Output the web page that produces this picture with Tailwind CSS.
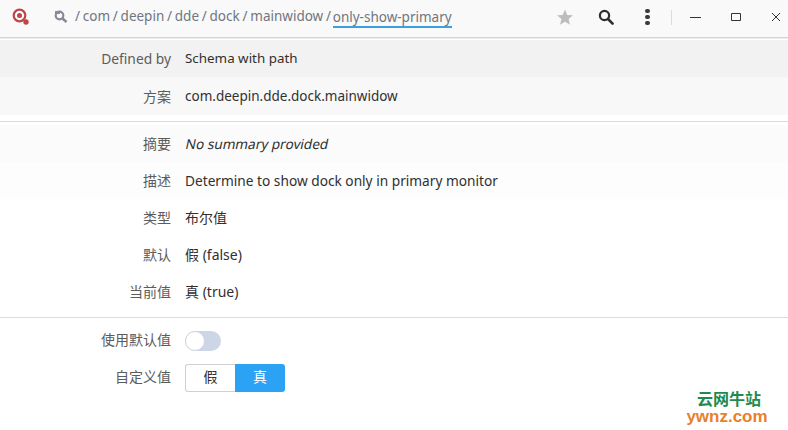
<!DOCTYPE html>
<html lang="en">
<head>
  <meta charset="UTF-8">
  <title>dconf</title>
  <script src="https://cdn.jsdelivr.net/npm/@tailwindcss/browser@4"></script>
</head>
<body class="bg-white text-[#303030] overflow-hidden font-['Noto_Sans','Noto_Sans_CJK_SC',sans-serif] text-sm">
  <div class="relative w-[788px] h-[430px] overflow-hidden">
    <!-- Header -->
    <header class="h-[38px] pb-[3px] flex items-center bg-[#f9f9f9] border-b border-[#d4d4d4] shadow-[0_1px_0_#ececec]">
      <svg class="ml-[12px] w-[18px] h-[18px]" viewBox="0 0 18 18">
        <circle cx="7.5" cy="7.5" r="5.8" fill="none" stroke="#c04548" stroke-width="2.2"/>
        <circle cx="7.5" cy="7.5" r="2.5" fill="#c04548"/>
        <circle cx="14" cy="14" r="2.7" fill="#c04548"/>
      </svg>
      <svg class="ml-[24px] w-[14px] h-[14px]" viewBox="0 0 14 14">
        <circle cx="5.5" cy="5.5" r="3.8" fill="none" stroke="#868b96" stroke-width="2.2"/>
        <path d="M8.5 8.5 L12.5 12" stroke="#868b96" stroke-width="2.6"/>
        <path d="M1 1h5v3H1z" fill="#868b96"/>
      </svg>
      <nav class="ml-[7px] flex items-center gap-[2.75px] text-[13.5px] text-[#6f7680] whitespace-nowrap">
        <span>/</span><span>com</span><span>/</span><span>deepin</span><span>/</span><span>dde</span><span>/</span><span>dock</span><span>/</span><span>mainwidow</span><span>/</span>
        <span class="-ml-[1px] h-[18px] leading-[18px] border-b-2 border-[#3b9fe0] mt-[1px] box-content">only-show-primary</span>
      </nav>
      <div class="ml-auto flex items-center h-full">
        <svg class="w-[18px] h-[18px] mr-[24px]" viewBox="0 0 24 24"><path d="M12 2l3 7.2 7.6.6-5.8 5 1.8 7.4L12 18.3 5.4 22.2l1.8-7.4-5.8-5 7.6-.6z" fill="#bdbdbd"/></svg>
        <svg class="w-[16px] h-[16px] mr-[31px]" viewBox="0 0 16 16">
          <circle cx="6.5" cy="6.5" r="4.6" fill="none" stroke="#2e2e2e" stroke-width="2.2"/>
          <path d="M10 10l4.6 4.6" stroke="#2e2e2e" stroke-width="2.6" stroke-linecap="round"/>
        </svg>
        <div class="flex flex-col gap-[2px] mr-[21px]">
          <span class="w-[5px] h-[4px] rounded-full bg-[#3a3a3a]"></span>
          <span class="w-[5px] h-[4px] rounded-full bg-[#3a3a3a]"></span>
          <span class="w-[5px] h-[4px] rounded-full bg-[#3a3a3a]"></span>
        </div>
        <div class="w-px h-[15px] bg-[#dcdcdc] mr-[18px]"></div>
        <svg class="w-[12px] h-[12px] mr-[28px]" viewBox="0 0 12 12"><path d="M0 6.5h11" stroke="#333" stroke-width="1"/></svg>
        <svg class="w-[12px] h-[12px] mr-[28px]" viewBox="0 0 12 12"><path d="M1.5 2.5h9v7h-9z" fill="none" stroke="#333" stroke-width="1"/></svg>
        <svg class="w-[12px] h-[12px] mr-[6px]" viewBox="0 0 12 12"><path d="M2 2l8 8M10 2l-8 8" stroke="#333" stroke-width="1"/></svg>
      </div>
    </header>

    <!-- Property rows -->
    <main class="pt-[2px]">
      <div class="h-[37px] flex items-center bg-[#f2f2f2]">
        <div class="w-[171px] text-right text-[#5c5c5c] text-[13.8px]">Defined by</div>
        <div class="ml-[14px] text-[13.4px]">Schema with path</div>
      </div>
      <div class="h-[38px] pt-[2px] flex items-center bg-[#f8f8f8]">
        <div class="w-[171px] text-right text-[#5c5c5c]">方案</div>
        <div class="ml-[14px] text-[13.5px]">com.deepin.dde.dock.mainwidow</div>
      </div>
      <div class="mt-[6px] border-t border-[#dcdcdc]"></div>
      <div class="h-[37px] mt-[3px] flex items-center bg-[#fbfbfb]">
        <div class="w-[171px] text-right text-[#5c5c5c]">摘要</div>
        <div class="ml-[15px] text-[13.6px] inline-block -skew-x-12">No summary provided</div>
      </div>
      <div class="h-[37px] flex items-center bg-[#fdfdfd]">
        <div class="w-[171px] text-right text-[#5c5c5c]">描述</div>
        <div class="ml-[14px] text-[13.7px]">Determine to show dock only in primary monitor</div>
      </div>
      <div class="h-[37px] flex items-center">
        <div class="w-[171px] text-right text-[#5c5c5c]">类型</div>
        <div class="ml-[14px]">布尔值</div>
      </div>
      <div class="h-[37px] flex items-center">
        <div class="w-[171px] text-right text-[#5c5c5c]">默认</div>
        <div class="ml-[14px]">假 (false)</div>
      </div>
      <div class="h-[37px] flex items-center">
        <div class="w-[171px] text-right text-[#5c5c5c]">当前值</div>
        <div class="ml-[14px]">真 (true)</div>
      </div>
      <div class="mt-[7px] border-t border-[#dcdcdc]"></div>
      <div class="h-[37px] mt-[4px] flex items-center">
        <div class="w-[171px] pb-[2px] text-right text-[#5c5c5c]">使用默认值</div>
        <div class="ml-[14px] w-[36px] h-[20px] rounded-full bg-[#ccd6e6] relative">
          <span class="absolute left-0 top-0 w-[20px] h-[20px] rounded-full bg-white border border-[#d0d6e0]"></span>
        </div>
      </div>
      <div class="h-[37px] flex items-center">
        <div class="w-[171px] pb-[2px] text-right text-[#5c5c5c]">自定义值</div>
        <div class="ml-[14px] flex h-[28px] w-[100px] text-[14px]">
          <div class="w-[50px] pb-[2px] flex items-center justify-center bg-white border border-r-0 border-[#d0d0d0] rounded-l-[3px]">假</div>
          <div class="w-[50px] pb-[2px] flex items-center justify-center bg-[#2ca2f5] text-white rounded-r-[3px]">真</div>
        </div>
      </div>
    </main>

    <!-- Watermark -->
    <div class="absolute left-[685px] top-[389px] w-[84px] text-center font-bold">
      <div class="pl-[4px] text-[16px] text-[#1f8a4c] leading-[19px] font-['Noto_Sans_CJK_SC',sans-serif]">云网牛站</div>
      <div class="text-[17px] text-[#e8812a] leading-[17px] font-['Liberation_Sans',sans-serif]">ywnz.com</div>
    </div>
  </div>
</body>
</html>
